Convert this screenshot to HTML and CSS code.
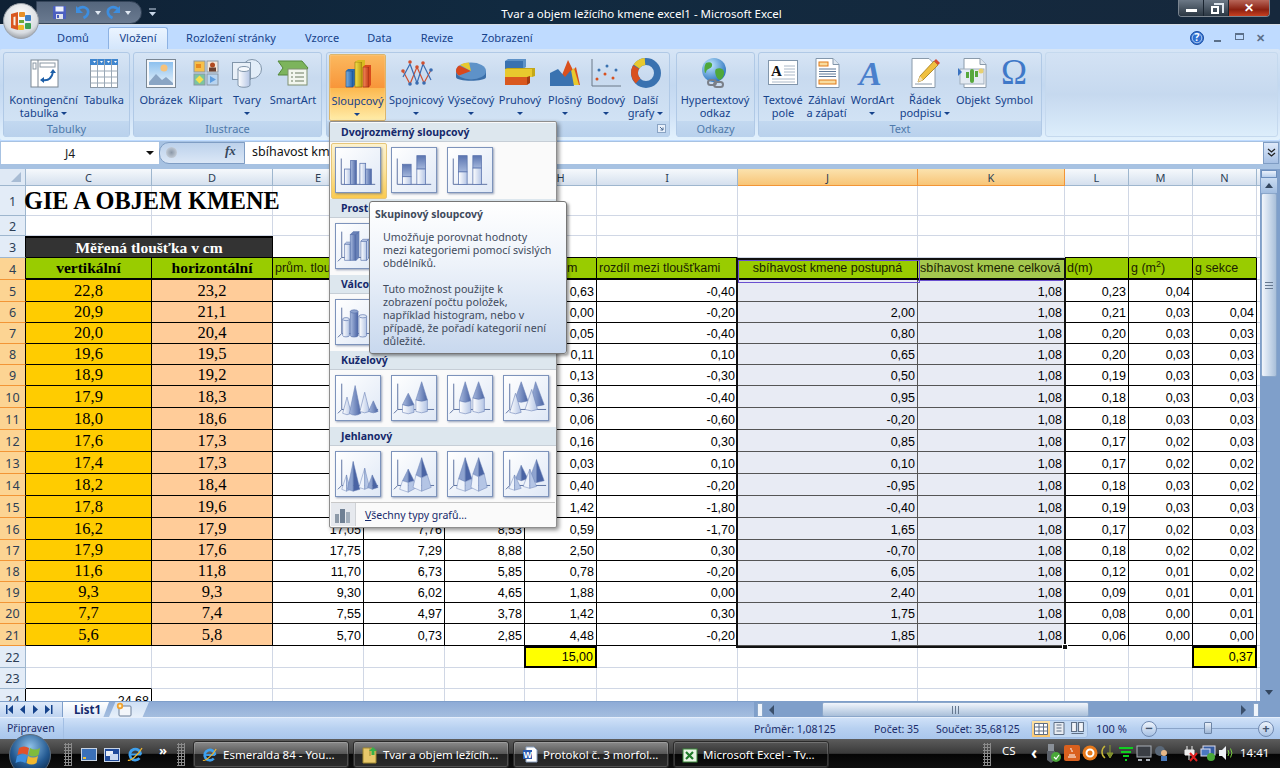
FILE: index.html
```html
<!DOCTYPE html>
<html lang="cs">
<head>
<meta charset="utf-8">
<title>Tvar a objem ležícího kmene excel1 - Microsoft Excel</title>
<link rel="stylesheet" href="styles.css">
</head>
<body>
<svg class="defs" width="0" height="0" aria-hidden="true">
  <defs>
    <linearGradient id="gD" x1="0" x2="1" y1="0" y2="0"><stop offset="0" stop-color="#a9bbdf"/><stop offset="1" stop-color="#4a64a4"/></linearGradient>
    <linearGradient id="gV" x1="0" x2="0" y1="0" y2="1"><stop offset="0" stop-color="#5a74b0"/><stop offset="1" stop-color="#a4b7dc"/></linearGradient>
    <linearGradient id="gL" x1="0" x2="1" y1="0" y2="0"><stop offset="0" stop-color="#ffffff"/><stop offset="1" stop-color="#b4c5e5"/></linearGradient>
    <linearGradient id="gBlue" x1="0" x2="1"><stop offset="0" stop-color="#7fb0e0"/><stop offset="1" stop-color="#1f5fa8"/></linearGradient>
    <linearGradient id="gYel" x1="0" x2="1"><stop offset="0" stop-color="#f6e04a"/><stop offset="1" stop-color="#b99a10"/></linearGradient>
    <linearGradient id="gRed" x1="0" x2="1"><stop offset="0" stop-color="#f58a5a"/><stop offset="1" stop-color="#c23a16"/></linearGradient>
    <linearGradient id="gSky" x1="0" x2="0" y1="0" y2="1"><stop offset="0" stop-color="#8cc0ee"/><stop offset="1" stop-color="#e6f2fb"/></linearGradient>
    <radialGradient id="gOrb" cx=".5" cy=".35" r=".7"><stop offset="0" stop-color="#ffffff"/><stop offset=".7" stop-color="#d9dde2"/><stop offset="1" stop-color="#8b9097"/></radialGradient>
    <radialGradient id="gStart" cx=".5" cy=".3" r=".75"><stop offset="0" stop-color="#8fc1e8"/><stop offset=".6" stop-color="#245a92"/><stop offset="1" stop-color="#0a2442"/></radialGradient>
    <radialGradient id="gGlobe" cx=".35" cy=".3" r=".8"><stop offset="0" stop-color="#bfe6ff"/><stop offset="1" stop-color="#1f6ab8"/></radialGradient>

    <g id="axes"><path d="M5.500 11V38H41" fill="none" stroke="#5a6f9f"/></g>
    <g id="axes3"><path d="M6 8V35H44M6 35L2 39" fill="none" stroke="#5a6f9f"/></g>
    <g id="ie"><path d="M13.800 8.500A5.500 5.500 0 1 0 12.500 12.200" fill="none" stroke="#3ea0ee" stroke-width="2.800"/><path d="M3 8.500h11" stroke="#3ea0ee" stroke-width="2"/><path d="M1 14C3 16 12 8 15 2" fill="none" stroke="#f0b830" stroke-width="1.200"/></g>

    <symbol id="t2a" viewBox="0 0 46 46"><use href="#axes"/><g stroke="#5a73ad" stroke-width=".8"><rect x="9" y="22" width="6" height="16" fill="url(#gL)"/><rect x="15.300" y="13" width="6" height="25" fill="url(#gD)"/><rect x="25" y="16" width="6" height="22" fill="url(#gL)"/><rect x="31" y="22" width="6" height="16" fill="url(#gD)"/></g></symbol>
    <symbol id="t2b" viewBox="0 0 46 46"><use href="#axes"/><g stroke="#5a73ad" stroke-width=".8"><rect x="11" y="17" width="9" height="13" fill="url(#gV)"/><rect x="11" y="30" width="9" height="8" fill="url(#gL)"/><rect x="26" y="8" width="9" height="14" fill="url(#gV)"/><rect x="26" y="22" width="9" height="16" fill="url(#gL)"/></g></symbol>
    <symbol id="t2c" viewBox="0 0 46 46"><use href="#axes"/><g stroke="#5a73ad" stroke-width=".8"><rect x="11" y="8" width="9" height="17" fill="url(#gV)"/><rect x="11" y="25" width="9" height="13" fill="url(#gL)"/><rect x="26" y="8" width="9" height="13" fill="url(#gV)"/><rect x="26" y="21" width="9" height="17" fill="url(#gL)"/></g></symbol>

    <symbol id="tBox" viewBox="0 0 46 46"><use href="#axes3"/><g stroke="#5a73ad" stroke-width=".7"><path d="M9 21h6v17H9z" fill="url(#gL)"/><path d="M9 21l2-2h6l-2 2zM15 21l2-2v17l-2 2z" fill="#c6d3ec"/><path d="M15 11h6v27h-6z" fill="url(#gD)"/><path d="M15 11l3-3h6l-3 3zM21 11l3-3v27l-3 3z" fill="#6a82b8"/><path d="M26 18h6v20h-6z" fill="url(#gL)"/><path d="M26 18l2-2h6l-2 2zM32 18l2-2v20l-2 2z" fill="#c6d3ec"/></g></symbol>
    <symbol id="tCyl" viewBox="0 0 46 46"><use href="#axes3"/><g stroke="#5a73ad" stroke-width=".7"><path d="M7 20v17a3.500 1.600 0 007 0V20z" fill="url(#gL)"/><ellipse cx="10.500" cy="20" rx="3.500" ry="1.600" fill="#dfe7f5"/><path d="M15 12v25a4 1.700 0 008 0V12z" fill="url(#gD)"/><ellipse cx="19" cy="12" rx="4" ry="1.700" fill="#8ea3cf"/><path d="M24 17v20a4 1.700 0 008 0V17z" fill="url(#gL)"/><ellipse cx="28" cy="17" rx="4" ry="1.700" fill="#dfe7f5"/></g></symbol>

    <symbol id="c1" viewBox="0 0 46 46"><use href="#axes3"/><g stroke="#6a80b5" stroke-width=".6"><path d="M7 39L11.500 22 16 39Q11.500 42 7 39z" fill="url(#gL)"/><path d="M14 39L20 10 26 39Q20 43 14 39z" fill="url(#gD)"/><path d="M25 37L30 17 35 37Q30 40 25 37z" fill="url(#gL)"/><path d="M34 37L39 26 44 37Q39 40 34 37z" fill="url(#gD)"/></g></symbol>
    <symbol id="c2" viewBox="0 0 46 46"><use href="#axes3"/><g stroke="#6a80b5" stroke-width=".6"><path d="M11 30L17 18 23 30Q17 33 11 30z" fill="url(#gD)"/><path d="M11 30Q17 33 23 30L23 38Q17 41 11 38z" fill="url(#gL)"/><path d="M25 25L31 6 37 25Q31 28 25 25z" fill="url(#gD)"/><path d="M25 25Q31 28 37 25L37 37Q31 40 25 37z" fill="url(#gL)"/></g></symbol>
    <symbol id="c3" viewBox="0 0 46 46"><use href="#axes3"/><g stroke="#6a80b5" stroke-width=".6"><path d="M12 26L18 6 24 26Q18 29 12 26z" fill="url(#gD)"/><path d="M12 26Q18 29 24 26L24 38Q18 41 12 38z" fill="url(#gL)"/><path d="M26 23L32 6 38 23Q32 26 26 23z" fill="url(#gD)"/><path d="M26 23Q32 26 38 23L38 37Q32 40 26 37z" fill="url(#gL)"/></g></symbol>
    <symbol id="c4" viewBox="0 0 46 46"><use href="#axes3"/><g stroke="#6a80b5" stroke-width=".6"><path d="M27 30L33 6 42 30Q34 33 27 30z" fill="url(#gD)"/><path d="M11 26L18 6 25 26Q18 29 11 26z" fill="url(#gD)"/><path d="M22 35L29 14 35 35Q29 38 22 35z" fill="url(#gL)"/><path d="M6 38L12 18 18 38Q12 41 6 38z" fill="url(#gL)"/></g></symbol>

    <symbol id="p1" viewBox="0 0 46 46"><use href="#axes3"/><g stroke="#6a80b5" stroke-width=".5"><path d="M6 39L11 24V41z" fill="#eef3fb"/><path d="M11 24L15 39 11 41z" fill="#b4c5e5"/><path d="M12 39L18 10V41z" fill="#8ea3cf"/><path d="M18 10L25 39 18 41z" fill="#4a64a4"/><path d="M24 37L30 17V39z" fill="#eef3fb"/><path d="M30 17L35 37 30 39z" fill="#b4c5e5"/><path d="M33 37L38 24V39z" fill="#8ea3cf"/><path d="M38 24L44 37 38 39z" fill="#4a64a4"/></g></symbol>
    <symbol id="p2" viewBox="0 0 46 46"><use href="#axes3"/><g stroke="#6a80b5" stroke-width=".5"><path d="M11 30L17 18 V32z" fill="#8ea3cf"/><path d="M17 18L23 30 17 32z" fill="#4a64a4"/><path d="M11 30L17 32V42L8 39z" fill="#eef3fb"/><path d="M17 32L23 30 26 37 17 42z" fill="#b4c5e5"/><path d="M25 24L31 6V27z" fill="#8ea3cf"/><path d="M31 6L37 24 31 27z" fill="#4a64a4"/><path d="M25 24L31 27V41L22 37z" fill="#eef3fb"/><path d="M31 27L37 24 41 37 31 41z" fill="#b4c5e5"/></g></symbol>
    <symbol id="p3" viewBox="0 0 46 46"><use href="#axes3"/><g stroke="#6a80b5" stroke-width=".5"><path d="M11 28L18 6V31z" fill="#8ea3cf"/><path d="M18 6L25 28 18 31z" fill="#4a64a4"/><path d="M11 28L18 31V41L9 38z" fill="#eef3fb"/><path d="M18 31L25 28 27 37 18 41z" fill="#b4c5e5"/><path d="M26 23L32 6V26z" fill="#8ea3cf"/><path d="M32 6L38 23 32 26z" fill="#4a64a4"/><path d="M26 23L32 26V41L24 37z" fill="#eef3fb"/><path d="M32 26L38 23 41 37 32 41z" fill="#b4c5e5"/></g></symbol>
    <symbol id="p4" viewBox="0 0 46 46"><use href="#axes3"/><g stroke="#6a80b5" stroke-width=".5"><path d="M26 30L34 8V32z" fill="#8ea3cf"/><path d="M34 8L42 30 34 32z" fill="#4a64a4"/><path d="M12 28L18 14V30z" fill="#8ea3cf"/><path d="M18 14L25 28 18 30z" fill="#4a64a4"/><path d="M20 36L27 18V38z" fill="#eef3fb"/><path d="M27 18L34 36 27 38z" fill="#b4c5e5"/><path d="M5 38L11 24V40z" fill="#eef3fb"/><path d="M11 24L18 38 11 40z" fill="#b4c5e5"/></g></symbol>
  </defs>
</svg>

<div class="window">
  <header class="titlebar">
    <span class="title">Tvar a objem ležícího kmene excel1 - Microsoft Excel</span>
    <div class="winctl">
      <span class="wc"><i class="wc-min"></i></span>
      <span class="wc"><i class="wc-max"></i></span>
      <span class="wc wc-close">✕</span>
    </div>
  </header>
  <div class="qat">
    <svg width="15" height="15" viewBox="0 0 15 15"><rect x="1" y="1" width="13" height="13" rx="1" fill="#4b5fc0"/><rect x="3.500" y="1.500" width="8" height="5" fill="#eef2fb"/><rect x="4" y="9" width="7" height="5" fill="#dfe3ee"/><rect x="5" y="10" width="2" height="3" fill="#4b5fc0"/></svg>
    <svg class="q-undo" width="16" height="15" viewBox="0 0 16 15"><path d="M3 4C8 0 14 3 13 8c-.4 2.500-2.500 4-4.500 5" fill="none" stroke="#3d8ee0" stroke-width="2.600"/><path d="M1 1v7h7z" fill="#3d8ee0"/></svg>
    <span class="q-car"></span>
    <svg class="q-redo" width="16" height="15" viewBox="0 0 16 15"><path d="M13 4C8 0 2 3 3 8c.4 2.500 2.500 4 4.500 5" fill="none" stroke="#3d8ee0" stroke-width="2.600"/><path d="M15 1v7H8z" fill="#3d8ee0"/></svg>
    <span class="q-car"></span>
  </div>
  <svg class="qat-more" width="9" height="9" viewBox="0 0 9 9"><path d="M1 1h7" stroke="#c8d6e8"/><path d="M1 4h7L4.500 8z" fill="#c8d6e8"/></svg>

  <div class="office" role="img" aria-label="Office">
    <svg width="36" height="36" viewBox="0 0 36 36"><circle cx="18" cy="18" r="17.500" fill="url(#gOrb)" stroke="#9aa0a8"/><path d="M8 11l7-2v18l-7-2z" fill="#d9561f"/><path d="M10.500 14l2-.4v8.800l-2-.4z" fill="#f8efe4"/><rect x="16" y="9" width="6" height="5" rx="1" fill="#e89028"/><rect x="22" y="12" width="6" height="6" rx="1" fill="#3f7fc6"/><rect x="16" y="17" width="5" height="3" fill="#68a83a"/><rect x="22" y="20" width="6" height="6" rx="1" fill="#3aa053"/><rect x="15" y="22" width="6" height="5" rx="1" fill="#f0b82a"/></svg>
  </div>

  <nav class="tabs">
    <span class="tab t-dom">Domů</span>
    <span class="tab t-vlo active">Vložení</span>
    <span class="tab t-roz">Rozložení stránky</span>
    <span class="tab t-vzo">Vzorce</span>
    <span class="tab t-dat">Data</span>
    <span class="tab t-rev">Revize</span>
    <span class="tab t-zob">Zobrazení</span>
    <div class="wb-ctl">
      <svg width="14" height="14" viewBox="0 0 14 14"><circle cx="7" cy="7" r="6.500" fill="#2f6fd0" stroke="#1c4da0"/><circle cx="7" cy="7" r="4.800" fill="none" stroke="#fff" stroke-width=".6"/></svg>
      <span class="help-q">?</span>
      <span class="mini-min"></span>
      <span class="mini-max"></span>
      <span class="mini-x">✕</span>
    </div>
  </nav>

  <section class="ribbon">
    <div class="group g-tab">
      <div class="gbody">
        <div class="rb b-kont">
          <svg width="32" height="32" viewBox="0 0 32 32"><rect x="3" y="3" width="27" height="27" fill="#fff" stroke="#7a8794"/><path d="M10 3v27" stroke="#7a8794"/><rect x="5" y="6" width="3" height="6" fill="none" stroke="#8a97a4"/><rect x="12" y="6" width="15" height="4" fill="none" stroke="#8a97a4"/><path d="M14 23c6 1 10-2 11-8" fill="none" stroke="#1d5fa8" stroke-width="1.800"/><path d="M22 16l3-4 3 4zM16 20l-4 3 4 3z" fill="#1d5fa8"/></svg>
          <span class="lbl">Kontingenční<br>tabulka <i class="car"></i></span>
        </div>
        <div class="rb b-tabu">
          <svg width="32" height="32" viewBox="0 0 32 32"><rect x="2.500" y="2.500" width="27" height="28" fill="#fff" stroke="#8a97a4"/><rect x="2" y="2" width="28" height="6" fill="#3f86cf"/><path d="M2.500 14h27M2.500 20h27M2.500 26h27M9.500 2.500v28M16.500 2.500v28M23.500 2.500v28" stroke="#9aa8b6"/><path d="M5 4h3l-1.500 2zM12 4h3l-1.500 2zM19 4h3l-1.500 2zM26 4h3l-1.500 2z" fill="#fff"/></svg>
          <span class="lbl">Tabulka</span>
        </div>
      </div>
      <div class="cap">Tabulky</div>
    </div>

    <div class="group g-ilu">
      <div class="gbody">
        <div class="rb b-obr">
          <svg width="32" height="32" viewBox="0 0 32 32"><rect x="1.500" y="2.500" width="29" height="28" fill="#f6f8fb" stroke="#7a8794"/><rect x="4" y="5" width="24" height="23" fill="url(#gSky)"/><circle cx="19" cy="11" r="3.500" fill="#f6c27a"/><path d="M4 25l7-8 6 6 4-3 7 6v2H4z" fill="#8aa5c4"/></svg>
          <span class="lbl">Obrázek</span>
        </div>
        <div class="rb b-kli">
          <svg width="32" height="32" viewBox="0 0 32 32"><rect x="4" y="4" width="11" height="11" fill="#f6c04a" stroke="#8a97a4"/><rect x="6" y="7" width="5" height="4" fill="#e88a20"/><rect x="17" y="4" width="11" height="11" fill="#f4e6d8" stroke="#8a97a4"/><circle cx="22.500" cy="8" r="2.500" fill="#b04a20"/><rect x="19" y="10.500" width="7" height="4" fill="#6a4030"/><rect x="4" y="17" width="11" height="11" fill="#7cc4a0" stroke="#8a97a4"/><path d="M9.500 18.500l4 4-4 4-4-4z" fill="#f6e04a"/><rect x="17" y="17" width="11" height="11" fill="#b8d4f0" stroke="#8a97a4"/><path d="M20 19l6 3.500-6 3.500z" fill="#5f9ee0"/></svg>
          <span class="lbl">Klipart</span>
        </div>
        <div class="rb b-tva">
          <svg width="32" height="32" viewBox="0 0 32 32"><circle cx="21" cy="12" r="9.500" fill="#e2edf8" stroke="#8296ab"/><rect x="1.500" y="5.500" width="18" height="17" fill="#e9f0f8" stroke="#8296ab"/><path d="M7 12v16c0 3 12 3 12 0V12z" fill="url(#gL)" stroke="#8296ab"/><ellipse cx="13" cy="12" rx="6" ry="2.500" fill="#f6f9fd" stroke="#8296ab"/></svg>
          <span class="lbl">Tvary<br><i class="car"></i></span>
        </div>
        <div class="rb b-sma">
          <svg width="32" height="32" viewBox="0 0 32 32"><path d="M1 4h24l6 7-6 7H1l5-7z" fill="#7cb45c" stroke="#54883c"/><rect x="11" y="12" width="19" height="16" fill="#f2f6ee" stroke="#7f9070"/><path d="M14 16h2M18 16h9M14 20h2M18 20h9M14 24h2M18 24h9" stroke="#6a7a60"/></svg>
          <span class="lbl">SmartArt</span>
        </div>
      </div>
      <div class="cap">Ilustrace</div>
    </div>

    <div class="group g-gra">
      <div class="gbody">
        <div class="rb b-slo hot">
          <svg width="32" height="32" viewBox="0 0 32 32"><path d="M4 13h7v16H4z" fill="url(#gBlue)" stroke="#1a4a80" stroke-width=".6"/><path d="M4 13l2-2h7l-2 2zM11 13l2-2v16l-2 2z" fill="#2a6ab0"/><path d="M13 4h7v25h-7z" fill="url(#gYel)" stroke="#8a7208" stroke-width=".6"/><path d="M13 4l3-2h7l-3 2zM20 4l3-2v25l-3 2z" fill="#d8bc20"/><path d="M21 9h6v20h-6z" fill="url(#gRed)" stroke="#902a10" stroke-width=".6"/><path d="M21 9l2-2h6l-2 2zM27 9l2-2v20l-2 2z" fill="#d84a1c"/></svg>
          <span class="lbl">Sloupcový<br><i class="car"></i></span>
        </div>
        <div class="rb b-spo">
          <svg width="32" height="32" viewBox="0 0 32 32"><g fill="none" stroke-width="1.200"><path d="M2 14l7 13 7-17 7 16 7-13" stroke="#d05030"/><path d="M2 20l7-13 7 19 6-19 8 16" stroke="#3a6cb0"/></g><g fill="#d05030"><circle cx="9" cy="5" r="1.800"/><circle cx="22" cy="6" r="1.800"/><circle cx="2" cy="14" r="1.800"/><circle cx="16" cy="10" r="1.800"/></g><g fill="#3a6cb0"><circle cx="9" cy="27" r="1.800"/><circle cx="16" cy="26" r="1.800"/><circle cx="23" cy="26" r="1.800"/><circle cx="30" cy="13" r="1.800"/></g></svg>
          <span class="lbl">Spojnicový<br><i class="car"></i></span>
        </div>
        <div class="rb b-vys">
          <svg width="32" height="32" viewBox="0 0 32 32"><path d="M1 14v6c0 5 30 5 30 0v-6z" fill="#3a6ea8"/><ellipse cx="16" cy="14" rx="15" ry="8.500" fill="#5e92c8"/><path d="M16 14L4 8.500C2 10 1 12 1 14c0 1.500 1 3 3 4.500z" fill="#d9481c"/><path d="M16 14L5 8c3-1.800 7-2.500 9-2.500z" fill="#e8c92e"/></svg>
          <span class="lbl">Výsečový<br><i class="car"></i></span>
        </div>
        <div class="rb b-pru">
          <svg width="32" height="32" viewBox="0 0 32 32"><path d="M1 4h18v8H1z" fill="#3a72b0"/><path d="M1 4l3-2h18l-3 2zM19 4l3-2v8l-3 2z" fill="#5e92c8"/><path d="M1 12h27v8H1z" fill="#e8c92e"/><path d="M1 12l2-1h28l-3 1zM28 12l3-1v8l-3 1z" fill="#c4a818"/><path d="M1 20h22v8H1z" fill="#d9581f"/><path d="M23 20l3-1v7l-3 2z" fill="#a53c12"/></svg>
          <span class="lbl">Pruhový<br><i class="car"></i></span>
        </div>
        <div class="rb b-plo">
          <svg width="32" height="32" viewBox="0 0 32 32"><path d="M13 18L19 3l5 10 3-3 4 18H13z" fill="#d9501e"/><path d="M22 14l3-3 5 17h-8z" fill="#e8c92e"/><path d="M1 16l8-4 7 8 6-7 3 16H1z" fill="#3a72b0"/></svg>
          <span class="lbl">Plošný<br><i class="car"></i></span>
        </div>
        <div class="rb b-bod">
          <svg width="32" height="32" viewBox="0 0 32 32"><path d="M2 2v27h29" fill="none" stroke="#6a7888"/><g fill="#3a72b0"><circle cx="9" cy="13" r="1.500"/><circle cx="17" cy="9" r="1.500"/><circle cx="26" cy="13" r="1.500"/></g><g fill="#d9501e"><circle cx="7" cy="22" r="1.500"/><circle cx="15" cy="17" r="1.500"/><circle cx="23" cy="21" r="1.500"/></g></svg>
          <span class="lbl">Bodový<br><i class="car"></i></span>
        </div>
        <div class="rb b-dal">
          <svg width="32" height="32" viewBox="0 0 32 32"><circle cx="16" cy="16" r="11.500" fill="none" stroke="#3a72b0" stroke-width="7"/><path d="M6 10A11.500 11.500 0 0 0 8 24" fill="none" stroke="#d9501e" stroke-width="7"/><path d="M6.500 9.500A11.500 11.500 0 0 1 15 4.600" fill="none" stroke="#e8c92e" stroke-width="7"/></svg>
          <span class="lbl">Další<br>grafy <i class="car"></i></span>
        </div>
      </div>
      <div class="cap">Grafy
        <svg class="launch" width="9" height="9" viewBox="0 0 9 9"><rect x=".5" y=".5" width="8" height="8" fill="#e8f0fa" stroke="#8aa4c4"/><path d="M3 3l3 3M6 3.500V6H3.500" fill="none" stroke="#4a6a94"/></svg>
      </div>
    </div>

    <div class="group g-odk">
      <div class="gbody">
        <div class="rb b-hyp">
          <svg width="32" height="32" viewBox="0 0 32 32"><circle cx="15" cy="13" r="12" fill="url(#gGlobe)"/><path d="M7 6c4-2 7 0 6 3s-5 2-6 6-3-5 0-9zM17 12c4-2 9 0 8 5s-4 7-6 5-4-8-2-10z" fill="#4fa83a"/><g fill="none" stroke="#7a7f88" stroke-width="2"><rect x="9" y="23" width="8" height="5" rx="2.500"/><rect x="15" y="25" width="9" height="5" rx="2.500"/></g></svg>
          <span class="lbl">Hypertextový<br>odkaz</span>
        </div>
      </div>
      <div class="cap">Odkazy</div>
    </div>

    <div class="group g-txt">
      <div class="gbody">
        <div class="rb b-txp">
          <svg width="32" height="32" viewBox="0 0 32 32"><rect x="1.500" y="3.500" width="29" height="24" fill="#fff" stroke="#8296ab"/><text x="4" y="19" class="ico-a">A</text><path d="M17 9h11M17 12h11M17 15h11M17 18h11M5 22h23M5 25h23" stroke="#aab8c8"/></svg>
          <span class="lbl">Textové<br>pole</span>
        </div>
        <div class="rb b-zah">
          <svg width="32" height="32" viewBox="0 0 32 32"><path d="M5 1.500h17l6 6v23H5z" fill="#fff" stroke="#8296ab"/><path d="M22 1.500v6h6" fill="#dfe7f0" stroke="#8296ab"/><rect x="8" y="5" width="9" height="4" fill="#f8dca0" stroke="#e07a18"/><path d="M8 12h17M8 14.500h17M8 17h17M8 19.500h17" stroke="#5e7898"/><rect x="8" y="23" width="17" height="4" fill="#f8dca0" stroke="#e07a18"/></svg>
          <span class="lbl">Záhlaví<br>a zápatí</span>
        </div>
        <div class="rb b-wor">
          <svg width="32" height="32" viewBox="0 0 32 32"><text x="2" y="28" class="ico-w">A</text></svg>
          <span class="lbl">WordArt<br><i class="car"></i></span>
        </div>
        <div class="rb b-rad">
          <svg width="32" height="32" viewBox="0 0 32 32"><path d="M3 1.500h17l6 6v23H3z" fill="#fff" stroke="#8a9aaa"/><path d="M6 27h17" stroke="#8a9aaa"/><path d="M9 25l2-6L25 4l4 4L14 23z" fill="#f0c040" stroke="#a07818" stroke-width=".8"/><path d="M25 4l2-2 4 4-2 2z" fill="#d84a30"/><path d="M9 25l2-6 3 4z" fill="#f6e0b0"/></svg>
          <span class="lbl">Řádek<br>podpisu <i class="car"></i></span>
        </div>
        <div class="rb b-obj">
          <svg width="32" height="32" viewBox="0 0 32 32"><path d="M7 1.500h16l6 6v23H7z" fill="#fff" stroke="#8a9aaa"/><path d="M23 1.500v6h6" fill="#dfe7f0" stroke="#8a9aaa"/><rect x="3" y="12" width="24" height="15" fill="#e4eaf2" stroke="#a0aebc"/><path d="M1 11l4 4-4 4z" fill="#3a72c0"/><rect x="13" y="12" width="4" height="14" rx="2" fill="#58a83c"/><rect x="9" y="15" width="3" height="6" fill="#58a83c"/><rect x="18" y="14" width="3" height="6" fill="#58a83c"/><circle cx="24" cy="14" r="2.500" fill="#e8d070"/></svg>
          <span class="lbl">Objekt</span>
        </div>
        <div class="rb b-sym">
          <span class="ico-o">Ω</span>
          <span class="lbl">Symbol</span>
        </div>
      </div>
      <div class="cap">Text</div>
    </div>
    <div class="rib-rest"></div>
  </section>

  <div class="formula">
    <div class="namebox"><span class="nb-val">J4</span><i class="nb-car"></i></div>
    <div class="fxpill"><i class="fx-dot"></i><span class="fx">fx</span></div>
    <div class="finput">sbíhavost kmene postupná</div>
    <div class="fexpand">
      <svg width="9" height="10" viewBox="0 0 9 10"><path d="M1 1l3.500 3L8 1M1 5l3.500 3L8 5" fill="none" stroke="#222" stroke-width="1.300"/></svg>
    </div>
  </div>

  <main class="workarea">
    <div class="sheetwrap">
      <table class="sheet">
        <colgroup><col class="c-rh"><col class="c-c"><col class="c-d"><col class="c-e"><col class="c-f"><col class="c-g"><col class="c-h"><col class="c-i"><col class="c-j"><col class="c-k"><col class="c-lmn"><col class="c-lmn"><col class="c-lmn"><col class="c-o"></colgroup>
        <thead><tr class="hdr"><th class="corner"><i></i></th><th>C</th><th>D</th><th>E</th><th>F</th><th>G</th><th>H</th><th>I</th><th class="sel">J</th><th class="sel">K</th><th>L</th><th>M</th><th>N</th><th></th></tr></thead>
        <tbody>
          <tr class="r30"><th>1</th><td class="ttl">GIE A OBJEM KMENE</td><td></td><td></td><td></td><td></td><td></td><td></td><td></td><td></td><td></td><td></td><td></td><td></td></tr>
          <tr class="r20"><th>2</th><td></td><td></td><td></td><td></td><td></td><td></td><td></td><td></td><td></td><td></td><td></td><td></td><td></td></tr>
          <tr class="r22"><th class="bk">3</th><td class="dark" colspan="2">Měřená tloušťka v cm</td><td class="kb"></td><td class="kb"></td><td class="kb"></td><td class="kb"></td><td class="kb"></td><td></td><td></td><td class="kb"></td><td class="kb"></td><td class="kb"></td><td></td></tr>
          <tr class="r22"><th class="so bk">4</th><td class="gh">vertikální</td><td class="gh">horizontální</td><td class="ga"><span class="clip">prům. tloušťka</span></td><td class="ga"></td><td class="ga"></td><td class="ga m">m</td><td class="ga">rozdíl mezi tloušťkami</td><td class="ga ctr">sbíhavost kmene postupná</td><td class="ga kh">sbíhavost kmene celková</td><td class="ga">d(m)</td><td class="ga">g (m<sup>2</sup>)</td><td class="ga">g sekce</td><td></td></tr>
          <tr class="r22"><th class="so bk">5</th><td class="tv t1">22,8</td><td class="th t1">23,2</td><td class="n"></td><td class="n"></td><td class="n"></td><td class="n">0,63</td><td class="n">-0,40</td><td class="n s"></td><td class="n s">1,08</td><td class="n">0,23</td><td class="n">0,04</td><td class="n"></td><td></td></tr>
          <tr class="r21"><th class="so bk">6</th><td class="tv">20,9</td><td class="th">21,1</td><td class="n"></td><td class="n"></td><td class="n"></td><td class="n">0,00</td><td class="n">-0,20</td><td class="n s">2,00</td><td class="n s">1,08</td><td class="n">0,21</td><td class="n">0,03</td><td class="n">0,04</td><td></td></tr>
          <tr class="r21"><th class="so bk">7</th><td class="tv">20,0</td><td class="th">20,4</td><td class="n"></td><td class="n"></td><td class="n"></td><td class="n">0,05</td><td class="n">-0,40</td><td class="n s">0,80</td><td class="n s">1,08</td><td class="n">0,20</td><td class="n">0,03</td><td class="n">0,03</td><td></td></tr>
          <tr class="r21"><th class="so bk">8</th><td class="tv">19,6</td><td class="th">19,5</td><td class="n"></td><td class="n"></td><td class="n"></td><td class="n">0,11</td><td class="n">0,10</td><td class="n s">0,65</td><td class="n s">1,08</td><td class="n">0,20</td><td class="n">0,03</td><td class="n">0,03</td><td></td></tr>
          <tr class="r21"><th class="so bk">9</th><td class="tv">18,9</td><td class="th">19,2</td><td class="n"></td><td class="n"></td><td class="n"></td><td class="n">0,13</td><td class="n">-0,30</td><td class="n s">0,50</td><td class="n s">1,08</td><td class="n">0,19</td><td class="n">0,03</td><td class="n">0,03</td><td></td></tr>
          <tr class="r22"><th class="so bk">10</th><td class="tv">17,9</td><td class="th">18,3</td><td class="n"></td><td class="n"></td><td class="n"></td><td class="n">0,36</td><td class="n">-0,40</td><td class="n s">0,95</td><td class="n s">1,08</td><td class="n">0,18</td><td class="n">0,03</td><td class="n">0,03</td><td></td></tr>
          <tr class="r22"><th class="so bk">11</th><td class="tv">18,0</td><td class="th">18,6</td><td class="n"></td><td class="n"></td><td class="n"></td><td class="n">0,06</td><td class="n">-0,60</td><td class="n s">-0,20</td><td class="n s">1,08</td><td class="n">0,18</td><td class="n">0,03</td><td class="n">0,03</td><td></td></tr>
          <tr class="r22"><th class="so bk">12</th><td class="tv">17,6</td><td class="th">17,3</td><td class="n"></td><td class="n"></td><td class="n"></td><td class="n">0,16</td><td class="n">0,30</td><td class="n s">0,85</td><td class="n s">1,08</td><td class="n">0,17</td><td class="n">0,02</td><td class="n">0,03</td><td></td></tr>
          <tr class="r22"><th class="so bk">13</th><td class="tv">17,4</td><td class="th">17,3</td><td class="n"></td><td class="n"></td><td class="n"></td><td class="n">0,03</td><td class="n">0,10</td><td class="n s">0,10</td><td class="n s">1,08</td><td class="n">0,17</td><td class="n">0,02</td><td class="n">0,02</td><td></td></tr>
          <tr class="r22"><th class="so bk">14</th><td class="tv">18,2</td><td class="th">18,4</td><td class="n"></td><td class="n"></td><td class="n"></td><td class="n">0,40</td><td class="n">-0,20</td><td class="n s">-0,95</td><td class="n s">1,08</td><td class="n">0,18</td><td class="n">0,03</td><td class="n">0,02</td><td></td></tr>
          <tr class="r22"><th class="so bk">15</th><td class="tv">17,8</td><td class="th">19,6</td><td class="n"></td><td class="n"></td><td class="n"></td><td class="n">1,42</td><td class="n">-1,80</td><td class="n s">-0,40</td><td class="n s">1,08</td><td class="n">0,19</td><td class="n">0,03</td><td class="n">0,03</td><td></td></tr>
          <tr class="r22"><th class="so bk">16</th><td class="tv">16,2</td><td class="th">17,9</td><td class="n">17,05</td><td class="n">7,76</td><td class="n">8,53</td><td class="n">0,59</td><td class="n">-1,70</td><td class="n s">1,65</td><td class="n s">1,08</td><td class="n">0,17</td><td class="n">0,02</td><td class="n">0,03</td><td></td></tr>
          <tr class="r21"><th class="so bk">17</th><td class="tv">17,9</td><td class="th">17,6</td><td class="n">17,75</td><td class="n">7,29</td><td class="n">8,88</td><td class="n">2,50</td><td class="n">0,30</td><td class="n s">-0,70</td><td class="n s">1,08</td><td class="n">0,18</td><td class="n">0,02</td><td class="n">0,02</td><td></td></tr>
          <tr class="r21"><th class="so bk">18</th><td class="tv">11,6</td><td class="th">11,8</td><td class="n">11,70</td><td class="n">6,73</td><td class="n">5,85</td><td class="n">0,78</td><td class="n">-0,20</td><td class="n s">6,05</td><td class="n s">1,08</td><td class="n">0,12</td><td class="n">0,01</td><td class="n">0,02</td><td></td></tr>
          <tr class="r21"><th class="so bk">19</th><td class="tv">9,3</td><td class="th">9,3</td><td class="n">9,30</td><td class="n">6,02</td><td class="n">4,65</td><td class="n">1,88</td><td class="n">0,00</td><td class="n s">2,40</td><td class="n s">1,08</td><td class="n">0,09</td><td class="n">0,01</td><td class="n">0,01</td><td></td></tr>
          <tr class="r21"><th class="so bk">20</th><td class="tv">7,7</td><td class="th">7,4</td><td class="n">7,55</td><td class="n">4,97</td><td class="n">3,78</td><td class="n">1,42</td><td class="n">0,30</td><td class="n s">1,75</td><td class="n s">1,08</td><td class="n">0,08</td><td class="n">0,00</td><td class="n">0,01</td><td></td></tr>
          <tr class="r22"><th class="so bk">21</th><td class="tv">5,6</td><td class="th">5,8</td><td class="n">5,70</td><td class="n">0,73</td><td class="n">2,85</td><td class="n">4,48</td><td class="n">-0,20</td><td class="n s">1,85</td><td class="n s">1,08</td><td class="n">0,06</td><td class="n">0,00</td><td class="n">0,00</td><td></td></tr>
          <tr class="r22"><th>22</th><td></td><td></td><td></td><td></td><td></td><td class="y">15,00</td><td></td><td></td><td></td><td></td><td></td><td class="y">0,37</td><td></td></tr>
          <tr class="r21"><th>23</th><td class="kb"></td><td></td><td></td><td></td><td></td><td></td><td></td><td></td><td></td><td></td><td></td><td></td><td></td></tr>
          <tr class="r22"><th class="bk">24</th><td class="n kr">24,68</td><td></td><td></td><td></td><td></td><td></td><td></td><td></td><td></td><td></td><td></td><td></td><td></td></tr>
        </tbody>
      </table>
      <div class="selection"><i class="fillh"></i></div>
    </div>
    <aside class="vscroll">
      <span class="vsplit"></span>
      <span class="varrow"></span>
      <div class="vthumb"><i></i></div>
      <div class="vtrack"></div>
      <span class="varrow down"></span>
    </aside>

    <div class="menu">
      <div class="mhead">Dvojrozměrný sloupcový</div>
      <div class="mrow first">
        <span class="thumb on"><svg><use href="#t2a"/></svg></span>
        <span class="thumb"><svg><use href="#t2b"/></svg></span>
        <span class="thumb"><svg><use href="#t2c"/></svg></span>
      </div>
      <div class="mhead">Prostorový sloupcový</div>
      <div class="mrow">
        <span class="thumb"><svg><use href="#tBox"/></svg></span>
        <span class="thumb"><svg><use href="#tBox"/></svg></span>
        <span class="thumb"><svg><use href="#tBox"/></svg></span>
        <span class="thumb"><svg><use href="#tBox"/></svg></span>
      </div>
      <div class="mhead">Válcový</div>
      <div class="mrow">
        <span class="thumb"><svg><use href="#tCyl"/></svg></span>
        <span class="thumb"><svg><use href="#tCyl"/></svg></span>
        <span class="thumb"><svg><use href="#tCyl"/></svg></span>
        <span class="thumb"><svg><use href="#tCyl"/></svg></span>
      </div>
      <div class="mhead">Kuželový</div>
      <div class="mrow">
        <span class="thumb"><svg><use href="#c1"/></svg></span>
        <span class="thumb"><svg><use href="#c2"/></svg></span>
        <span class="thumb"><svg><use href="#c3"/></svg></span>
        <span class="thumb"><svg><use href="#c4"/></svg></span>
      </div>
      <div class="mhead">Jehlanový</div>
      <div class="mrow">
        <span class="thumb"><svg><use href="#p1"/></svg></span>
        <span class="thumb"><svg><use href="#p2"/></svg></span>
        <span class="thumb"><svg><use href="#p3"/></svg></span>
        <span class="thumb"><svg><use href="#p4"/></svg></span>
      </div>
      <div class="mfoot">
        <span class="mf-ic"><svg width="18" height="18" viewBox="0 0 18 18"><rect x="1" y="8" width="4" height="9" fill="#8d9aa8"/><rect x="6" y="3" width="5" height="14" fill="#6f8094"/><rect x="12" y="6" width="4" height="11" fill="#a3afbc"/></svg></span>
        <span class="mf-tx"><u>V</u>šechny typy grafů...</span>
      </div>
    </div>

    <div class="tip">
      <div class="tip-t">Skupinový sloupcový</div>
      <p>Umožňuje porovnat hodnoty<br>mezi kategoriemi pomocí svislých<br>obdélníků.</p>
      <p>Tuto možnost použijte k<br>zobrazení počtu položek,<br>například histogram, nebo v<br>případě, že pořadí kategorií není<br>důležité.</p>
    </div>
  </main>

  <div class="tabbar">
    <div class="snav">
      <svg width="56" height="11" viewBox="0 0 56 11"><g fill="#15428b"><path d="M1 1h1.500v9H1zM8 1v9L3 5.500zM20 1v9l-5-4.500zM28 1v9l5-4.500zM40 1v9l5-4.500zM46 1h1.500v9H46z"/></g></svg>
    </div>
    <div class="stab">List1</div>
    <div class="stab-new">
      <svg width="18" height="15" viewBox="0 0 18 15"><rect x="4" y="4" width="12" height="10" rx="1" fill="#f3f6fa" stroke="#6b7f99"/><circle cx="5" cy="4" r="3.200" fill="#f0a030"/><circle cx="5" cy="4" r="1.400" fill="#fff2c0"/></svg>
    </div>
    <div class="hscroll">
      <i class="hsplit"></i>
      <span class="harrow"></span>
      <div class="hthumb"><i></i></div>
      <span class="harrow right"></span>
      <i class="hsplit last"></i>
    </div>
  </div>

  <footer class="status">
    <span class="st-l">Připraven</span>
    <span class="st-a">Průměr: 1,08125</span>
    <span class="st-b">Počet: 35</span>
    <span class="st-c">Součet: 35,68125</span>
    <div class="views">
      <span class="vb on"><svg width="14" height="12" viewBox="0 0 14 12"><path d="M.5.500h13v11H.5zM.5 4h13M.5 8h13M5 .500v11M9.500.500v11" fill="#fff" stroke="#5f6f85"/></svg></span>
      <span class="vb"><svg width="12" height="13" viewBox="0 0 12 13"><path d="M1 .500h10v12H1z" fill="#e8ecf2" stroke="#5f6f85"/><path d="M3.500 3h5M3.500 6h5M3.500 9h5" stroke="#5f6f85"/></svg></span>
      <span class="vb"><svg width="13" height="13" viewBox="0 0 13 13"><path d="M.5.500h5v9h-5zM7.500.500h5v9h-5zM.5 11.500h12" fill="#f2f4f8" stroke="#5f6f85" stroke-width="1.200"/></svg></span>
    </div>
    <span class="zoomv">100 %</span>
    <span class="zbtn">−</span>
    <div class="zslider"><i></i></div>
    <span class="zbtn">+</span>
  </footer>

  <div class="taskbar">
    <div class="start" role="img" aria-label="Start">
      <svg width="42" height="42" viewBox="0 0 42 42"><circle cx="21" cy="21" r="20.500" fill="url(#gStart)" stroke="#5a6a7a"/><path d="M10 14q5-3 10 0l-1.500 7q-5-3-10 0z" fill="#e0512b"/><path d="M21 14q5 3 10 0l-1.500 7q-5 3-10 0z" fill="#7fbb3c"/><path d="M8 22q5-3 10 0l-1.500 7q-5-3-10 0z" fill="#3d8fe0"/><path d="M19 22q5 3 10 0l-1.500 7q-5 3-10 0z" fill="#f2b82e"/></svg>
    </div>
    <i class="grip"></i>
    <div class="ql">
      <svg width="16" height="13" viewBox="0 0 16 13"><rect x=".5" y=".5" width="15" height="12" fill="#3a70b8" stroke="#c8d4e4"/><rect x="2" y="9" width="3" height="2" fill="#e8c040"/></svg>
      <svg width="16" height="14" viewBox="0 0 16 14"><rect x=".5" y=".5" width="15" height="13" fill="#1f4a9a" stroke="#c8d4e4"/><rect x="2" y="3" width="7" height="5" fill="#e8eef8"/><rect x="6" y="6" width="8" height="6" fill="#c8d8f0"/></svg>
      <svg width="17" height="17" viewBox="0 0 17 17"><use href="#ie"/></svg>
    </div>
    <span class="chev">»</span>
    <i class="grip g2"></i>
    <div class="tbtn b1">
      <svg width="16" height="16" viewBox="0 0 17 17"><use href="#ie"/></svg>
      <span>Esmeralda 84 - You...</span>
    </div>
    <div class="tbtn b2">
      <svg width="16" height="18" viewBox="0 0 16 18"><path d="M1 2h9l4 3v12H1z" fill="#e8c86a" stroke="#a08830"/><path d="M8 2v8" stroke="#a08830"/><path d="M11 1l4 4h-2.500v4h-3V5H7z" fill="#38b048"/></svg>
      <span>Tvar a objem ležícíh...</span>
    </div>
    <div class="tbtn b3">
      <svg width="16" height="17" viewBox="0 0 16 17"><path d="M4 1h8l3 3v12H4z" fill="#fff" stroke="#8aa0c0"/><rect x="1" y="4" width="9" height="9" fill="#2a5ab0"/><text x="1.500" y="12" class="ico-wd">W</text></svg>
      <span>Protokol č. 3 morfol...</span>
    </div>
    <div class="tbtn b4 cur">
      <svg width="16" height="16" viewBox="0 0 16 16"><rect x="1" y="2" width="14" height="13" fill="#e8f4e4" stroke="#3a8a3a"/><path d="M4 5l7 7M11 5l-7 7" stroke="#1f7a2a" stroke-width="2.200"/></svg>
      <span>Microsoft Excel - Tv...</span>
    </div>
    <i class="grip g3"></i>
    <span class="lang">CS</span>
    <div class="tray">
      <span class="back">‹</span>
      <svg width="16" height="20" viewBox="0 0 16 20"><rect x="2" y="1" width="6" height="7" fill="#8a9098"/><path d="M1 8h8v9l-4 3-4-3z" fill="#5a6068"/><circle cx="10" cy="14" r="5" fill="#4aa83a"/><path d="M8 14l2 2 3-4" stroke="#fff" fill="none" stroke-width="1.200"/></svg>
      <svg width="16" height="16" viewBox="0 0 16 16"><rect width="16" height="16" rx="2" fill="#d9601e"/><path d="M4 12h8M5 10h6M7 3c-1 2 2 2 1 4" stroke="#fff" fill="none"/></svg>
      <svg width="16" height="16" viewBox="0 0 16 16"><circle cx="8" cy="8" r="7.500" fill="#e87a1c"/><circle cx="8" cy="8" r="3.500" fill="none" stroke="#fff" stroke-width="2"/></svg>
      <svg width="16" height="18" viewBox="0 0 16 18"><path d="M5 2C1 5 1 11 5 14" fill="none" stroke="#c8b838" stroke-width="1.500"/><path d="M10 1v9M7 9h6l-3 5z" fill="#7a8a28" stroke="#8a9a30"/></svg>
      <svg width="16" height="15" viewBox="0 0 14 15"><path d="M0 1h14v2H0zM2 5h10v2H2zM4 9h6v2H4zM6 13h2v2H6z" fill="#10d020"/></svg>
      <svg width="16" height="16" viewBox="0 0 16 16"><rect x="1" y="1" width="14" height="11" fill="#3a3e44" stroke="#aab0b8"/><path d="M2 15h4M10 15h4" stroke="#aab0b8" stroke-width="2"/></svg>
      <svg class="t-gap" width="16" height="16" viewBox="0 0 16 16"><circle cx="6" cy="6" r="5" fill="#5a6878"/><circle cx="10" cy="8" r="3" fill="#e8b888"/><rect x="7" y="11" width="6" height="5" fill="#4a78b8"/></svg>
      <svg class="t-gap2" width="16" height="17" viewBox="0 0 16 17"><path d="M5 1v4M10 1v4M3 5h9v5H3zM7 10v5" stroke="#eee" fill="#eee"/><path d="M8 8l7 8M15 8l-7 8" stroke="#e02020" stroke-width="2"/></svg>
      <svg width="16" height="16" viewBox="0 0 16 16"><rect x="3" y="1" width="12" height="9" fill="#345aa0" stroke="#dde"/><rect x="1" y="4" width="9" height="7" fill="#4a78c0" stroke="#dde"/><circle cx="11" cy="12" r="4" fill="#4aa83a"/></svg>
      <svg width="16" height="16" viewBox="0 0 16 16"><path d="M1 5h3l4-4v14l-4-4H1z" fill="#eef2f6"/><path d="M10 5q2 3 0 6M12.500 3.500q3 4.500 0 9" stroke="#7ad040" fill="none"/></svg>
    </div>
    <span class="clock">14:41</span>
  </div>
</div>
</body>
</html>
```
FILE: styles.css
```css
* { box-sizing: border-box; }
html, body { margin: 0; padding: 0; height: 100%; overflow: hidden; }
body { font-family: "Noto Sans", "Liberation Sans", sans-serif; font-size: 11px; color: #15428b; background: #bfdbff; }
.defs { position: absolute; }
.window { position: relative; width: 1280px; height: 768px; display: flex; flex-direction: column; overflow: hidden; }

/* title bar */
.titlebar { height: 25px; flex: none; background: linear-gradient(90deg, #0f2135, #112a40 40%, #16283c); border-bottom: 1px solid #d7dde4; display: flex; align-items: center; justify-content: center; position: relative; }
.title { color: #fff; font-size: 11.500px; padding-left: 3px; padding-top: 2px; }
.winctl { position: absolute; right: 10px; top: 0; width: 92px; height: 17px; display: flex; border: 1px solid #7b8590; border-top: 0; border-radius: 0 0 4px 4px; overflow: hidden; }
.wc { width: 25px; background: linear-gradient(#6c7886, #2a3642); border-right: 1px solid #1a2430; display: flex; align-items: center; justify-content: center; }
.wc-close { flex: 1; background: linear-gradient(#b8675a, #8a2010 60%, #c84020); color: #fff; font-size: 12px; font-weight: 700; border: 0; line-height: 1; }
.wc-min { width: 11px; height: 3px; background: #fff; margin-top: 5px; }
.wc-max { width: 8px; height: 8px; border: 2px solid #fff; position: relative; margin: 3px 2px 0 0; }
.wc-max::before { content: ""; position: absolute; left: 1px; top: -5px; width: 8px; height: 8px; border: 2px solid #dfe6ee; border-left: 0; border-bottom: 0; }

.qat { position: absolute; left: 36px; top: 1px; width: 106px; height: 23px; border-radius: 0 12px 12px 0; background: linear-gradient(#55667d, #6a7a90); border: 1px solid #35455a; display: flex; align-items: center; padding-left: 15px; gap: 4px; }
.q-undo { margin-left: 4px; }
.q-car { width: 0; height: 0; border: 3px solid transparent; border-top: 4px solid #dfe8f2; margin-top: 4px; }
.qat-more { position: absolute; left: 148px; top: 8px; }
.office { position: absolute; left: 3px; top: 3px; width: 36px; height: 36px; z-index: 5; }

/* tabs */
.tabs { height: 24px; flex: none; background: #bfdbff; display: flex; align-items: flex-end; padding-left: 38px; position: relative; }
.tab { height: 22px; display: flex; align-items: center; justify-content: center; font-size: 11px; padding-bottom: 2px; }
.t-dom { width: 70px; } .t-vlo { width: 60px; } .t-roz { width: 126px; } .t-vzo { width: 56px; } .t-dat { width: 59px; } .t-rev { width: 56px; } .t-zob { width: 84px; }
.tab.active { background: linear-gradient(#ebf4ff, #d4e6fb); border: 1px solid #8db2e3; border-bottom: 0; border-radius: 3px 3px 0 0; }
.wb-ctl { position: absolute; right: 0; top: 5px; width: 92px; height: 16px; }
.wb-ctl svg { position: absolute; left: 2px; top: 1px; }
.help-q { position: absolute; left: 2px; top: 0; width: 14px; text-align: center; color: #fff; font-weight: 700; font-size: 10px; line-height: 15px; }
.mini-min { position: absolute; left: 26px; top: 10px; width: 7px; height: 2px; background: #5b6f88; }
.mini-max { position: absolute; left: 47px; top: 3px; width: 9px; height: 7px; border: 1px solid #5b6f88; border-top-width: 2px; }
.mini-x { position: absolute; left: 68px; top: 0; color: #5b6f88; font-size: 11px; font-weight: 700; line-height: 15px; }

/* ribbon */
.ribbon { height: 91px; flex: none; padding: 3px 5px 2px 3px; display: flex; background: linear-gradient(#d6e5f6, #c3d8f0 40%, #cfe1f6 70%, #e3f2fd); border-radius: 2px; }
.group { height: 85px; display: flex; flex-direction: column; border: 1px solid #b0c9e6; border-radius: 3px; background: linear-gradient(#d7e5f5, #c8daef 30%, #d4e5f6); margin-right: 3px; flex: none; position: relative; }
.g-tab { width: 127px; } .g-ilu { width: 189px; margin-right: 4px; } .g-gra { width: 344px; margin-right: 6px; } .g-odk { width: 79px; } .g-txt { width: 284px; }
.gbody { flex: 1; display: flex; padding-left: 3px; }
.g-tab .gbody { padding-left: 2px; }
.g-gra .gbody { padding-left: 2px; }
.g-odk .gbody { padding-left: 3px; }
.cap { height: 16px; flex: none; background: linear-gradient(#c2d8f0, #b9d1ec); color: #4f7aab; text-align: center; line-height: 15px; font-size: 11px; border-radius: 0 0 3px 3px; }
.launch { position: absolute; right: 3px; bottom: 3px; }
.rb { display: flex; flex-direction: column; align-items: center; padding-top: 4px; flex: none; height: 68px; }
.rb svg { display: block; height: 32px; flex: none; margin-bottom: 4px; }
.lbl { display: block; text-align: center; line-height: 13px; font-size: 11px; white-space: nowrap; }
.b-kont { width: 75px; } .b-tabu { width: 46px; }
.b-obr { width: 48px; } .b-kli { width: 41px; } .b-tva { width: 42px; } .b-sma { width: 50px; }
.b-slo { width: 57px; margin-right: 1px; } .b-spo { width: 59px; } .b-vys { width: 50px; } .b-pru { width: 48px; } .b-plo { width: 42px; } .b-bod { width: 40px; } .b-dal { width: 39px; }
.b-hyp { width: 70px; }
.b-txp { width: 42px; } .b-zah { width: 45px; } .b-wor { width: 47px; } .b-rad { width: 58px; } .b-obj { width: 38px; } .b-sym { width: 44px; }
.hot { background: linear-gradient(#fbb95f, #f8963a 50%, #fcb84e 51%, #ffeca8); border: 1px solid #dbb66c; border-radius: 2px; box-shadow: inset 0 0 1px #fff; padding-top: 3px; height: 67px; margin-top: 1px; }
.car { display: inline-block; width: 0; height: 0; border: 3px solid transparent; border-top: 3px solid #15428b; border-bottom: 0; vertical-align: 2px; }
.rib-rest { width: 233px; flex: none; height: 85px; border: 1px solid #c5d9ee; border-radius: 3px; background: linear-gradient(#d3e2f4, #c6d9ef 50%, #dcedfb); }
.ico-a { font-family: "Liberation Serif", serif; font-size: 15px; font-weight: 700; fill: #111; }
.ico-w { font-family: "Liberation Serif", serif; font-size: 34px; font-weight: 700; font-style: italic; fill: #4a80cc; }
.ico-wd { font-family: "Liberation Sans", sans-serif; font-size: 9px; font-weight: 700; fill: #fff; }
.ico-o { font-family: "Liberation Serif", serif; font-size: 35px; color: #3f78c8; line-height: 32px; height: 36px; }

/* formula bar */
.formula { height: 25px; flex: none; margin-top: 1px; display: flex; background: #a7c2e2; padding-top: 1px; padding-bottom: 2px; }
.namebox { width: 158px; margin-left: 1px; background: #fff; color: #1a1a1a; font-size: 12px; display: flex; align-items: center; position: relative; }
.nb-val { width: 138px; text-align: center; }
.nb-car { position: absolute; left: 145px; top: 9px; border: 4px solid transparent; border-top: 4px solid #111; }
.fxpill { width: 86px; background: linear-gradient(#bcd1eb, #dbe7f6); border: 1px solid #7f9dc4; border-radius: 10px 0 0 10px; position: relative; }
.fx-dot { position: absolute; left: 6px; top: 4px; width: 11px; height: 11px; border-radius: 50%; background: radial-gradient(#8b98a8, #d8dfe8); }
.fx { position: absolute; left: 65px; top: 0; font-family: "Liberation Serif", serif; font-style: italic; font-weight: 700; font-size: 13px; color: #37475c; }
.finput { flex: 1; background: #fff; color: #111; font-size: 12.500px; padding-left: 7px; line-height: 20px; white-space: nowrap; overflow: hidden; }
.fexpand { width: 16px; margin-right: 1px; background: linear-gradient(#dfeafa, #a6c0e4); border: 1px solid #7f9dc4; display: flex; align-items: center; justify-content: center; }

/* sheet */
.workarea { height: 535px; flex: none; display: flex; position: relative; background: #a7c2e2; padding-top: 3px; }
.sheetwrap { flex: none; width: 1260px; height: 532px; overflow: hidden; background: #fff; position: relative; }
.sheet { border-collapse: separate; border-spacing: 0; table-layout: fixed; width: 1300px; font-family: "Liberation Sans", sans-serif; font-size: 12.500px; color: #000; }
.c-rh { width: 26px; } .c-c { width: 126px; } .c-d { width: 121px; } .c-e { width: 91px; } .c-f { width: 81px; } .c-g { width: 80px; } .c-h { width: 72px; } .c-i { width: 141px; } .c-j { width: 180px; } .c-k { width: 147px; } .c-lmn { width: 64px; } .c-o { width: 43px; }
.sheet td { padding: 0 2px; border-right: 1px solid #d0d7e5; border-bottom: 1px solid #d0d7e5; white-space: nowrap; overflow: visible; vertical-align: middle; }
.sheet th { padding: 0; font-weight: 400; font-family: "Noto Sans", sans-serif; }
.hdr { height: 17px; }
.hdr th { background: linear-gradient(#f6f9fc, #d5e0ee); border-right: 1px solid #9eb6ce; border-bottom: 1px solid #9eb6ce; color: #2c3e55; font-size: 11px; line-height: 15px; }
.hdr th.sel { background: linear-gradient(#fbe2ae, #f8c577); border-right-color: #f29536; border-bottom-color: #f29536; }
.corner { background: #dfe9f5 !important; position: relative; }
.corner i { position: absolute; right: 4px; bottom: 3px; border: 5px solid transparent; border-right-color: #a8bcd4; border-bottom-color: #a8bcd4; }
tbody th { background: #e3ecf7; border-right: 1px solid #9eb6ce; border-bottom: 1px solid #9eb6ce; color: #2c3e55; font-size: 12.500px; line-height: 14px; padding-top: 2px !important; }
tbody th.so { background: #fcd493; border-bottom-color: #f29536; border-right-color: #000; }
tbody th.bk { border-right-color: #000; }
.r30 { height: 30px; } .r20 { height: 20px; } .r22 { height: 22px; } .r21 { height: 21px; }
.sheet .ttl { font-family: "Liberation Serif", serif; font-weight: 700; font-size: 24.300px; padding: 0; text-indent: -2px; }
.sheet .dark { background: #333; border-top: 2px solid #000; border-right: 1px solid #000; border-bottom: 1px solid #000; color: #fff; font-family: "Liberation Serif", serif; font-weight: 700; font-size: 15.500px; text-align: center; }
.sheet .kb { border-bottom-color: #000; }
.sheet .kr { border-right-color: #000; }
.sheet .gh { background: #99cc00; font-family: "Liberation Serif", serif; font-weight: 700; font-size: 15.500px; text-align: center; border-right-color: #000; border-bottom: 2px solid #000; }
.sheet .ga { background: #99cc00; border-right-color: #000; border-bottom: 2px solid #000; overflow: hidden; color: #1a2200; }
.sheet .ga.ctr { text-align: center; }
.sheet .ga.kh { background: #a4c84e; }
.sheet .ga.m { padding-left: 42px; }
.clip { display: block; overflow: hidden; }
sup { font-size: 9px; line-height: 0; }
.sheet .tv, .sheet .th { font-family: "Liberation Serif", serif; font-size: 16.500px; text-align: center; border-right-color: #000; border-bottom-color: #000; }
.sheet .tv { background: #ffcc00; }
.sheet .th { background: #ffcc99; }
.sheet .t1 { border-top: 0; }
.sheet .n { text-align: right; border-right-color: #000; border-bottom-color: #000; padding-top: 2px; }
.sheet .n.s { background: #e8ebf4; border-right-color: #555; border-bottom-color: #555; }
.sheet .y { background: #ffff00; border: 2px solid #000; border-left-width: 1px; box-shadow: -1px 0 0 #000; text-align: right; font-size: 12.500px; }
.selection { position: absolute; left: 736px; top: 89px; width: 330px; height: 390px; border: 2px solid #111; pointer-events: none; }
.selection::before { content: ""; position: absolute; left: 0; top: 0; width: 180px; height: 21px; border: 1px solid #6a4fd0; }
.selection::after { content: ""; position: absolute; left: 180px; top: 20px; width: 145px; height: 1px; background: #6a4fd0; }
.fillh { position: absolute; right: -4px; bottom: -4px; width: 6px; height: 6px; background: #111; border: 1px solid #fff; }

.vscroll { width: 20px; flex: none; background: #7f9fca; display: flex; flex-direction: column; align-items: center; padding: 1px 2px 0 0; }
.vsplit { width: 16px; height: 8px; flex: none; background: linear-gradient(#eaf1fb, #b8cfec); border: 1px solid #6d8fbd; }
.varrow { width: 16px; height: 15px; flex: none; position: relative; background: linear-gradient(#cadcf2, #a2bde0); }
.varrow::after { content: ""; position: absolute; left: 4px; top: 5px; border: 4px solid transparent; border-top: 0; border-bottom: 5px solid #33465f; }
.varrow.down { background: none; height: 20px; }
.varrow.down::after { border: 4px solid transparent; border-bottom: 0; border-top: 5px solid #33465f; top: 9px; }
.vthumb { width: 16px; height: 184px; flex: none; background: linear-gradient(90deg, #f1f5fb, #c9d8ea 55%, #a9bfd9); border: 1px solid #8ba7ca; border-radius: 2px; display: flex; align-items: center; justify-content: center; }
.vthumb i { width: 8px; height: 7px; border-top: 1px solid #66788f; border-bottom: 1px solid #66788f; position: relative; }
.vthumb i::after { content: ""; position: absolute; left: 0; right: 0; top: 2px; height: 1px; background: #66788f; }
.vtrack { flex: 1; width: 16px; }

/* dropdown menu */
.menu { position: absolute; left: 329px; top: -45px; width: 228px; height: 407px; background: #fafafa; border: 1px solid #8e8e8e; border-radius: 2px; box-shadow: 2px 2px 4px rgba(0, 0, 0, .45); z-index: 10; padding-top: 1px; }
.mhead { height: 19px; background: #dde7ee; border-bottom: 1px solid #c6ced6; padding-left: 11px; font-weight: 700; font-size: 10.500px; line-height: 18px; color: #15296b; }
.mrow { display: flex; gap: 10px; padding: 5px 0 0 5px; height: 57px; position: relative; isolation: isolate; }
.thumb { width: 46px; height: 46px; flex: none; background: linear-gradient(135deg, #fff, #dfe8f6); border: 1px solid #7d93bb; box-shadow: 1px 1px 2px rgba(70, 90, 130, .55); position: relative; }
.thumb svg { display: block; width: 44px; height: 44px; }
.thumb.on::before { content: ""; position: absolute; left: -5px; top: -5px; right: -7px; bottom: -7px; background: linear-gradient(#fdf3cf, #fde6a4 45%, #fbcb50); border: 1px solid #e6c67a; border-radius: 2px; z-index: -1; }
.mfoot { position: absolute; left: 1px; right: 1px; bottom: 1px; height: 24px; border-top: 1px solid #c8c8c8; display: flex; align-items: center; }
.mf-ic { width: 25px; height: 100%; background: #e6e9ee; border-right: 1px solid #cfd2d6; display: flex; align-items: center; justify-content: center; }
.mf-tx { padding-left: 9px; font-size: 10.500px; color: #15296b; }

/* tooltip */
.tip { position: absolute; left: 369px; top: 35px; width: 198px; height: 153px; background: linear-gradient(#fff, #eef3fa 40%, #c8d8ee); border: 1px solid #767676; border-radius: 3px; box-shadow: 2px 2px 3px rgba(0, 0, 0, .4); z-index: 11; padding: 6px 4px 0 5px; color: #3f4a5c; font-size: 10.700px; line-height: 13px; white-space: nowrap; }
.tip-t { font-weight: 700; color: #3f4a5c; margin-bottom: 10px; font-size: 10.400px; }
.tip p { margin: 0 0 13px 8px; }

/* sheet tabs */
.tabbar { height: 16px; flex: none; display: flex; background: linear-gradient(#8eabd6, #a4bedf); border-top: 1px solid #7f9fca; position: relative; }
.snav { width: 63px; height: 15px; background: linear-gradient(#dfeafa, #bdd3f0); border-right: 1px solid #7f9fca; padding: 2px 0 0 5px; flex: none; }
.snav svg { display: block; }
.stab { width: 46px; height: 15px; background: linear-gradient(#fff, #dfeaf8); color: #15296b; font-weight: 700; font-size: 11.500px; line-height: 15px; text-align: center; padding-left: 3px; flex: none; clip-path: polygon(0 0, 100% 0, 88% 100%, 0 100%); }
.stab-new { width: 40px; height: 15px; background: linear-gradient(#cfe0f5, #e6eff9); clip-path: polygon(16% 0, 100% 0, 84% 100%, 0 100%); padding-left: 6px; flex: none; }
.stab-new svg { display: block; }
.hscroll { position: absolute; left: 754px; top: 0; width: 526px; height: 15px; background: #7f9fca; display: flex; align-items: center; }
.hsplit { width: 6px; height: 14px; background: #f0f5fb; border: 1px solid #8ba7ca; flex: none; margin-left: 3px; }
.harrow { width: 0; height: 0; border: 5px solid transparent; border-left: 0; border-right: 5px solid #3a4f6b; margin-left: 6px; flex: none; }
.harrow.right { border-right: 0; border-left: 5px solid #3a4f6b; margin-left: 152px; }
.hthumb { width: 267px; height: 15px; margin-left: 48px; background: linear-gradient(#f1f5fb, #c9d8ea 55%, #a9bfd9); border: 1px solid #8ba7ca; border-radius: 2px; flex: none; display: flex; align-items: center; justify-content: center; }
.hthumb i { width: 7px; height: 8px; border-left: 1px solid #66788f; border-right: 1px solid #66788f; position: relative; }
.hthumb i::after { content: ""; position: absolute; top: 0; bottom: 0; left: 2px; width: 1px; background: #66788f; }
.hsplit.last { margin-left: 7px; }

/* status bar */
.status { height: 22px; flex: none; display: flex; align-items: center; background: linear-gradient(#cfe1f8, #b7d0f0 50%, #a9c6ec); border-top: 1px solid #e5eefb; color: #1a2c6a; font-size: 10.500px; }
.st-l { width: 64px; padding-left: 7px; border-right: 1px solid #a3bfe4; height: 100%; line-height: 20px; flex: none; }
.st-a { margin-left: 690px; width: 120px; flex: none; }
.st-b { width: 62px; flex: none; }
.st-c { width: 95px; flex: none; }
.views { display: flex; width: 57px; height: 18px; margin-right: 8px; border: 1px solid #a3bfe4; border-radius: 3px; flex: none; background: #c3d9f3; }
.vb { flex: 1; display: flex; align-items: center; justify-content: center; }
.vb.on { background: linear-gradient(#fde3a8, #fbc76f); }
.zoomv { width: 40px; flex: none; font-size: 11px; }
.zbtn { width: 16px; height: 16px; flex: none; border-radius: 50%; background: linear-gradient(#eef4fc, #a8c2e4); border: 1px solid #7089b0; color: #44566e; font-size: 13px; font-weight: 700; line-height: 13px; text-align: center; }
.zbtn:first-of-type { margin-left: 0; }
.zoomv + .zbtn { margin-left: 5px; }
.zslider { width: 101px; flex: none; height: 1px; background: #8aa4c8; position: relative; }
.zslider i { position: absolute; left: 47px; top: -6px; width: 8px; height: 12px; background: linear-gradient(#eaf0f8, #9db6d6); border: 1px solid #6d85a6; border-radius: 1px; }

/* taskbar */
.taskbar { height: 30px; flex: none; display: flex; align-items: center; position: relative; background: linear-gradient(#5c5c5c, #3a3a3a 48%, #050505 50%, #101010); color: #fff; }
.start { position: absolute; left: 9px; top: -5px; width: 42px; height: 42px; }
.grip { position: absolute; left: 64px; top: 4px; width: 8px; height: 23px; background: radial-gradient(circle, #8a8a8a 1px, transparent 1.100px) 0 0 / 3px 3px; }
.grip.g2 { left: 177px; }
.grip.g3 { left: 983px; }
.ql { position: absolute; left: 81px; top: 7px; display: flex; gap: 7px; align-items: center; }
.chev { position: absolute; left: 159px; top: 3px; font-size: 13px; line-height: 16px; font-weight: 700; }
.tbtn { position: absolute; top: 2px; width: 156px; height: 27px; display: flex; align-items: center; gap: 5px; padding-left: 8px; border: 1px solid #2a2a2a; border-radius: 3px; background: linear-gradient(#8a8a8a, #565656 48%, #222 50%, #2c2c2c); box-shadow: inset 0 0 0 1px rgba(255, 255, 255, .18); font-size: 11.500px; white-space: nowrap; }
.b1 { left: 193px; } .b2 { left: 353px; } .b3 { left: 513px; } .b4 { left: 673px; }
.tbtn.cur { background: linear-gradient(#555, #333 48%, #050505 50%, #111); }
.lang { position: absolute; left: 1002px; top: 4px; font-size: 11.500px; }
.tray { position: absolute; left: 1031px; top: 3px; display: flex; align-items: center; gap: 2px; height: 22px; }
.back { font-size: 17px; line-height: 16px; font-weight: 700; width: 13px; }
.t-gap { margin-right: 8px; }
.t-gap2 { margin-left: 2px; }
.clock { position: absolute; left: 1240px; top: 6px; font-size: 11.500px; }
```
